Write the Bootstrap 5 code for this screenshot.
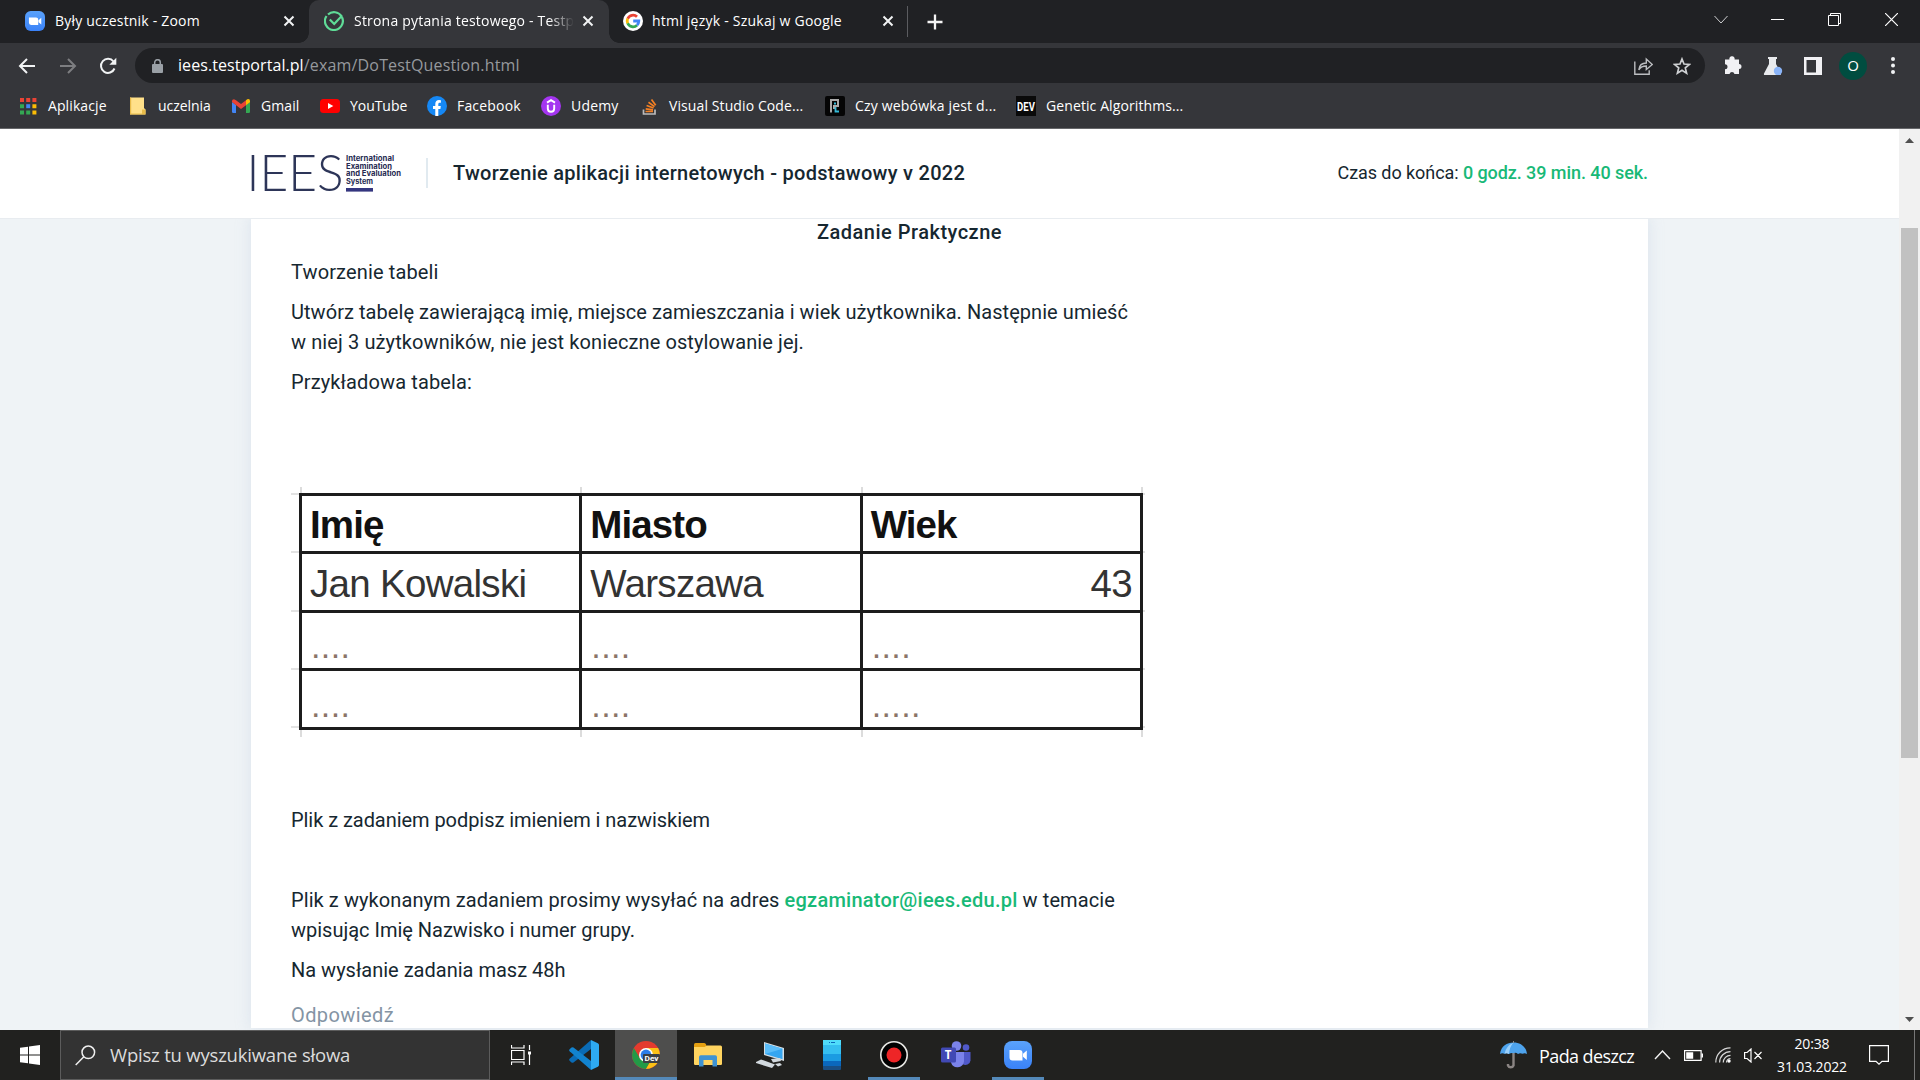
<!DOCTYPE html>
<html lang="pl">
<head>
<meta charset="utf-8">
<title>Strona pytania testowego - Testportal</title>
<link href="https://cdn.jsdelivr.net/npm/bootstrap@5.3.0/dist/css/bootstrap.min.css" rel="stylesheet">
<style>
html,body{height:100%;overflow:hidden}
body{font-family:"Open Sans","Noto Sans",sans-serif;background:#fff;color:#fff}
svg{display:block;flex:none}
.screen{width:1920px;height:1080px;overflow:hidden}
/* browser frame */
.tabstrip{height:43px;background:#202124}
.tab-item{height:43px;font-size:14px;line-height:40px;white-space:nowrap;letter-spacing:.2px;padding-bottom:2px}
.tab-one{width:309px;padding-left:25px}
.tab-two{width:300px;padding-left:15px;background:#35363a;border-radius:10px 10px 0 0;position:relative}
.tab-two::before,.tab-two::after{content:"";position:absolute;bottom:0;width:10px;height:10px}
.tab-two::before{left:-10px;background:radial-gradient(circle at 0 0,#202124 9.5px,#35363a 10px)}
.tab-two::after{right:-10px;background:radial-gradient(circle at 100% 0,#202124 9.5px,#35363a 10px)}
.tab-three{width:298px;padding-left:14px}
.tab-label{width:230px;padding-left:10px;overflow:hidden}
.tab-fade{width:230px;-webkit-mask-image:linear-gradient(90deg,#000 205px,transparent 230px);mask-image:linear-gradient(90deg,#000 205px,transparent 230px)}
.tab-three .tab-label{width:235px;padding-left:9px;letter-spacing:.23px}
.tab-sep{width:1px;height:31px;background:#5b5c60}
.win-btn{width:57px}
.toolbar{height:47px;background:#35363a;padding-left:7px;padding-top:5px}
.nav-cell{width:40.5px;height:35px}
.omnibox{height:35px;width:1570px;border-radius:18px;background:#202124;font-size:16px;white-space:nowrap;margin-left:6.5px;padding-left:17px;padding-right:14px}
.url-dim,.url-host{margin-bottom:2px}
.url-dim{color:#96999d;letter-spacing:.17px}
.url-host{letter-spacing:.07px;margin-left:15px}
.star{margin-left:20px}
.ext-cell{width:40px;height:35px}
.avatar{width:28px;height:28px;background:#004d40;font-size:15px;line-height:1;padding-bottom:1px}
.bookmarks{height:38px;background:#35363a;font-size:14px;white-space:nowrap;line-height:32px;padding-left:18px;letter-spacing:.1px}
.bm{height:32px;gap:10px}
.bm-110{width:110px}.bm-103{width:103px}.bm-89{width:89px}.bm-107{width:107px}.bm-114{width:114px}.bm-98{width:98px}.bm-186{width:186px}.bm-191{width:191px}
.bm-tight{letter-spacing:-.05px}
.bm-wide{letter-spacing:.18px}
.chrome-line{height:1px;background:#66676a}
/* exam page */
.viewport{height:901px;background:#eff3f6;font-family:Roboto,"Liberation Sans",sans-serif;color:#162730}
.page{width:1899px}
.page-head{height:90px;background:#fff;border-bottom:1px solid #e8ecf0;white-space:nowrap;padding:0 251px 1px;position:relative;z-index:1}
.head-logo{overflow:visible}
.head-sep{width:2px;height:30px;background:#e1eaf0;margin:0 25px 0 24px}
.head-title{font-size:20px;font-weight:500;letter-spacing:.28px}
.head-time{font-size:18px;letter-spacing:-.07px;padding-bottom:2px}
.sheet{width:1397px;height:811px;margin-left:251px;background:#fff;box-shadow:0 0 14px rgba(180,198,220,.35);font-size:20px;line-height:30px;padding:0 41px 0 40px}
.sheet p{margin:0 0 10px;white-space:nowrap}
.sheet .sheet-title{margin-top:-2px;font-weight:500;letter-spacing:.49px;text-align:center;width:1237px}
.ls-a{letter-spacing:.13px}.ls-b{letter-spacing:.056px}.ls-c{letter-spacing:.108px}.ls-d{letter-spacing:-.054px}.ls-e{letter-spacing:.086px}.ls-f{letter-spacing:.24px}
.ls-g{letter-spacing:-.01px}
.sheet .mail-note{padding-top:40px}
.green{color:#18b977;font-weight:500}
.sheet .answer-label{color:#8494a4;letter-spacing:.4px;margin-top:15px}
.sample{width:854px;height:250px;margin:90px 0 68px;padding:6px 0 0 8px;
 background:
 linear-gradient(#dcdcdc,#dcdcdc) 9px 0/2px 100% no-repeat,
 linear-gradient(#dcdcdc,#dcdcdc) 289px 0/2px 100% no-repeat,
 linear-gradient(#dcdcdc,#dcdcdc) 570px 0/2px 100% no-repeat,
 linear-gradient(#dcdcdc,#dcdcdc) 850px 0/2px 100% no-repeat,
 repeating-linear-gradient(#fff 0 6px,#e2e2e2 6px 8px,#fff 8px 58.3px)}
.sample table{width:844px;height:236px;border-collapse:collapse;table-layout:fixed;background:#fff;font-family:"Liberation Sans",Arial,sans-serif;font-size:38.5px;line-height:38px}
.sample tr{height:58.4px}
.sample td,.sample th{border:3px solid #1c1c1c;padding:3px 8px 0;white-space:nowrap;color:#333;letter-spacing:-.7px;vertical-align:middle}
.sample th{color:#111;letter-spacing:-.9px}
.sample .dots{color:#8a7468;font-size:34px;letter-spacing:.4px;padding:0 0 3px 9px;vertical-align:bottom}
.scrollbar{width:21px;height:901px;background:#f1f1f1;padding:9px 0 8px}
.thumb{width:17px;height:530px;background:#c1c1c1;margin-top:85px}
/* taskbar */
.taskbar{height:50px;background:#21211f;white-space:nowrap}
.start-cell{width:60px}
.search-box{width:430px;height:50px;background:#333;border:1px solid #5c5c5c;font-size:18.5px;color:#dcdcdc;padding-left:14px;letter-spacing:-.2px}
.search-text{margin-left:14px}
.task-cell{width:62px;height:50px;position:relative}
.task-first{margin-right:1px}
.task-active{background:#4e4e4d}
.task-open::after{content:"";position:absolute;bottom:0;height:3px;left:5px;right:5px;background:#5489b9}
.task-active::after{left:0;right:0}
.weather{font-size:18px;letter-spacing:-.6px;margin-left:12px;padding-top:3px;width:111px}
.clock{font-size:14px;line-height:23px;width:90px;letter-spacing:-.15px}
.desk-edge{width:1px;height:50px;background:#777;margin:0 5px 0 25px}
</style>
<script src="https://cdn.jsdelivr.net/npm/bootstrap@5.3.0/dist/js/bootstrap.bundle.min.js"></script>
</head>
<body>
<svg width="0" height="0" class="position-absolute"><defs>
<symbol id="closex" viewBox="0 0 12 12"><path d="M1.500 1.500l9 9M10.500 1.500l-9 9" stroke="#f1f3f4" stroke-width="2"/></symbol>
<linearGradient id="zg" x1="0" y1="0" x2="0" y2="1"><stop offset="0" stop-color="#5aa2fb"/><stop offset="1" stop-color="#3a82f8"/></linearGradient>
<symbol id="zoomcam" viewBox="0 0 28 28"><rect width="28" height="28" rx="8" fill="url(#zg)"/><path d="M5.500 9h10a3 3 0 0 1 3 3v7.500h-10a3 3 0 0 1-3-3zM19 12.800l3.800-3.300v9.500l-3.800-3.300z" fill="#fff"/></symbol>
</defs></svg>
<div class="screen d-flex flex-column">

 <div class="tabstrip d-flex">
  <div class="tab-item tab-one d-flex align-items-center"><svg width="20" height="20"><use href="#zoomcam"/></svg><span class="tab-label me-1">Były uczestnik - Zoom</span><svg class="ms-1" width="12" height="12"><use href="#closex"/></svg></div>
  <div class="tab-item tab-two d-flex align-items-center"><svg width="20" height="20" viewBox="0 0 20 20" fill="none" stroke="#5fdc97" stroke-width="2.200"><path d="M18 6.200A9 9 0 0 1 10 19 9 9 0 0 1 2.500 5M4 3.500A9 9 0 0 1 17.500 5.200L10.200 13 5.800 8.500"/></svg><span class="tab-label tab-fade">Strona pytania testowego - Testportal</span><svg class="ms-2" width="12" height="12"><use href="#closex"/></svg></div>
  <div class="tab-item tab-three d-flex align-items-center"><svg width="20" height="20" viewBox="0 0 20 20"><circle cx="10" cy="10" r="10" fill="#fff"/><g fill="none" stroke-width="2.800"><path d="M4.700 7.700A5.800 5.800 0 0 1 14 5.800" stroke="#ea4335"/><path d="M4.700 12.400a5.800 5.800 0 0 1 0-4.800" stroke="#fbbc05"/><path d="M4.700 12.300a5.800 5.800 0 0 0 9.300 1.900" stroke="#34a853"/><path d="M10.200 10h5.600a5.800 5.800 0 0 1-1.800 4.200" stroke="#4285f4"/></g></svg><span class="tab-label flex-shrink-0">html język - Szukaj w Google</span><svg class="ms-1" width="12" height="12"><use href="#closex"/></svg></div>
  <div class="d-flex align-items-center"><div class="tab-sep"></div><svg class="ms-3" width="22" height="16" viewBox="-3 0 22 16"><path d="M8 .5v15M.5 8h15" stroke="#f4f4f4" stroke-width="2.300"/></svg></div>
  <div class="d-flex align-items-center ms-auto pb-1">
   <div class="win-btn d-flex justify-content-center"><svg width="14" height="9" viewBox="0 0 14 9" fill="none" stroke="#cfd0d2"><path d="M.5 1l6.500 7 6.500-7"/></svg></div>
   <div class="win-btn d-flex justify-content-center"><svg width="13" height="13" viewBox="0 0 13 13"><path d="M0 6.500h13" stroke="#fff"/></svg></div>
   <div class="win-btn d-flex justify-content-center"><svg width="13" height="13" viewBox="0 0 13 13" fill="none" stroke="#fff"><path d="M.5 2.500h10v10h-10zM2.500 2.500v-2h10v10h-2"/></svg></div>
   <div class="win-btn d-flex justify-content-center"><svg width="13" height="13" viewBox="0 0 13 13"><path d="M0 0l13 13M13 0L0 13" stroke="#fff" stroke-width="1.200"/></svg></div>
  </div>
 </div>

 <div class="toolbar d-flex">
  <div class="nav-cell d-flex align-items-center justify-content-center"><svg width="18" height="16" viewBox="0 0 18 16" fill="none" stroke="#f1f3f4" stroke-width="2"><path d="M17 8H2M9 1L2 8l7 7"/></svg></div>
  <div class="nav-cell d-flex align-items-center justify-content-center"><svg width="18" height="16" viewBox="0 0 18 16" fill="none" stroke="#7d7e81" stroke-width="2"><path d="M1 8h15M9 1l7 7-7 7"/></svg></div>
  <div class="nav-cell d-flex align-items-center justify-content-center"><svg width="18" height="18" viewBox="0 0 18 18"><path d="M15.500 11.500A7 7 0 1 1 14.500 4.500" fill="none" stroke="#f1f3f4" stroke-width="2"/><path d="M17.300.8v7h-7z" fill="#f1f3f4"/></svg></div>
  <div class="omnibox d-flex align-items-center">
   <svg width="11" height="14" viewBox="0 0 11 14"><rect y="5" width="11" height="9" rx="1" fill="#9aa0a6"/><path d="M2.700 6V3.500a2.800 2.800 0 0 1 5.600 0V6" fill="none" stroke="#9aa0a6" stroke-width="1.500"/></svg>
   <span class="url-host">iees.testportal.pl</span><span class="url-dim">/exam/DoTestQuestion.html</span>
   <svg class="ms-auto" width="19" height="18" viewBox="0 0 19 18" fill="none" stroke="#bcbec1" stroke-width="1.400"><path d="M.8 4.500v12.700h14.400v-4M4.800 12.800c.5-4.500 3.500-6.800 7.500-6.800V2l6 5.500-6 5V9c-3.500 0-5.800 1-7.500 3.800z"/></svg>
   <svg class="star" width="18" height="18" viewBox="0 0 18 18" fill="none" stroke="#cfd1d3" stroke-width="1.700"><path d="M9 2l2 5 5.400.4-4.100 3.500 1.300 5.300L9 13.300l-4.600 2.900 1.300-5.300L1.600 7.400 7 7z"/></svg>
  </div>
  <div class="d-flex ms-1 ps-1">
   <div class="ext-cell d-flex align-items-center justify-content-center"><svg width="19" height="19" viewBox="0 0 19 19"><path d="M1 3.500h4.500A2.400 2.400 0 0 1 8 .3a2.400 2.400 0 0 1 2.500 3.200H15V8a2.400 2.400 0 1 1 0 5v5h-4.500a2.600 2.600 0 0 0-5 0H1v-4.800a2.500 2.500 0 0 0 0-5z" fill="#f1f1f4"/></svg></div>
   <div class="ext-cell d-flex align-items-center justify-content-center"><svg width="20" height="18" viewBox="0 0 20 18"><path d="M5 0h9v2h-1v5l5 9.500q.3 1.500-1.500 1.500H2Q.5 18 1 16.500L6 7V2H5z" fill="#e8eaed"/><circle cx="15" cy="14" r="4.200" fill="#8ab4f8"/></svg></div>
   <div class="ext-cell d-flex align-items-center justify-content-center"><svg width="18" height="18" viewBox="0 0 18 18"><path fill-rule="evenodd" fill="#f1f1f4" d="M0 0h18v18H0zM2.500 3v12.500H12V3z"/></svg></div>
   <div class="ext-cell d-flex align-items-center justify-content-center"><div class="avatar rounded-circle d-flex align-items-center justify-content-center">O</div></div>
   <div class="ext-cell d-flex align-items-center justify-content-center"><svg width="4" height="17" viewBox="0 0 4 17" fill="#f1f3f4"><circle cx="2" cy="2" r="2"/><circle cx="2" cy="8.500" r="2"/><circle cx="2" cy="15" r="2"/></svg></div>
  </div>
 </div>

 <div class="bookmarks d-flex">
  <div class="bm bm-110 d-flex align-items-center"><svg width="20" height="20" viewBox="0 0 20 20"><g fill="#ea4335"><path d="M2 2h4v4H2zM8.200 2h4v4h-4zM14.400 2h4v4h-4z"/></g><g fill="#34a853"><path d="M2 8.200h4v4H2zM2 14.400h4v4H2zM8.200 14.400h4v4h-4z"/></g><path fill="#4285f4" d="M8.200 8.200h4v4h-4z"/><path fill="#fbbc05" d="M14.400 8.200h4v4h-4zM14.400 14.400h4v4h-4z"/></svg><span>Aplikacje</span></div>
  <div class="bm bm-103 d-flex align-items-center bm-tight"><svg width="20" height="20" viewBox="0 0 20 20"><path d="M2 1.500h14V12l1.500 1.500v5H2z" fill="#ffe08a"/><path d="M2 1.500h1.200v17H2zM3 17.500h11v1H3zM14 13.500h3.500v5H14z" fill="#e8bb49"/></svg><span>uczelnia</span></div>
  <div class="bm bm-89 d-flex align-items-center"><svg width="20" height="20" viewBox="0 0 20 20"><path fill="#4285f4" d="M1 6l4 3v8H2.200Q1 17 1 15.800z"/><path fill="#34a853" d="M15 9l4-3v9.800q0 1.200-1.200 1.200H15z"/><path fill="#ea4335" d="M1 6V5q0-1.800 2-1.800l2 1 5 3.800 5-3.800v5L10 13 1 6z"/><path fill="#fbbc04" d="M15 4.200l1.200-.9Q19 2.500 19 5v1.200l-4 3z"/></svg><span>Gmail</span></div>
  <div class="bm bm-107 d-flex align-items-center bm-tight"><svg width="20" height="20" viewBox="0 0 20 20"><rect y="3" width="20" height="14" rx="3.500" fill="#f00"/><path d="M8 7v6l5.300-3z" fill="#fff"/></svg><span>YouTube</span></div>
  <div class="bm bm-114 d-flex align-items-center bm-wide"><svg width="20" height="20" viewBox="0 0 20 20"><circle cx="10" cy="10" r="10" fill="#1588f5"/><path d="M8.300 20v-7H6v-3h2.300V8c0-2.700 1.500-4 3.700-4l1.900.2v2.500h-1.200c-1.100 0-1.400.7-1.400 1.400V10h2.500l-.4 3h-2.100v7z" fill="#fff"/></svg><span>Facebook</span></div>
  <div class="bm bm-98 d-flex align-items-center bm-wide"><svg width="20" height="20" viewBox="0 0 20 20" fill="none" stroke="#fff" stroke-width="1.900"><circle cx="10" cy="10" r="10" fill="#a435f0" stroke="none"/><path d="M6 6.600L10 4.200l4 2.400M6.800 8.800v3.700c0 4.300 6.400 4.300 6.400 0V8.800"/></svg><span>Udemy</span></div>
  <div class="bm bm-186 d-flex align-items-center"><svg width="20" height="20" viewBox="0 0 20 20" fill="none"><path d="M4.500 13.500V18H16v-4.500" stroke="#bcbbbb" stroke-width="1.700"/><path d="M6.500 15.500H14M6.700 12.800l7.300 1M7.600 9.500l7 2.500M9.500 6.300l6 4.300M12.500 3.500l4.200 5.800" stroke="#f48024" stroke-width="1.700"/></svg><span>Visual Studio Code...</span></div>
  <div class="bm bm-191 d-flex align-items-center bm-wide"><svg width="20" height="20" viewBox="0 0 20 20" fill="none"><rect width="20" height="20" rx="2" fill="#050505"/><path d="M6 16.500V4h7v6H9v3" stroke="#aaa" stroke-width="2"/><path d="M9 7.500h2M10.500 11v4.500H14" stroke="#35b9d6" stroke-width="1.800"/></svg><span>Czy webówka jest d...</span></div>
  <div class="bm d-flex align-items-center"><svg width="20" height="20" viewBox="0 0 20 20"><rect width="20" height="20" fill="#0a0a0a"/><text x="1" y="14.500" font-family="Roboto" font-weight="700" font-size="12.500" textLength="18" lengthAdjust="spacingAndGlyphs" fill="#fff">DEV</text></svg><span>Genetic Algorithms...</span></div>
 </div>
 <div class="chrome-line"></div>

 <div class="viewport d-flex">
  <main class="page">
   <header class="page-head d-flex align-items-center">
    <svg class="head-logo" width="151" height="40" viewBox="0 0 151 40"><text x="-4.500" y="38" font-family="Lato" font-weight="300" font-size="50.500" textLength="97" lengthAdjust="spacingAndGlyphs" fill="#2d3558">IEES</text><g font-family="Inter" font-weight="700" font-size="7.600" fill="#262b52"><text x="95" y="8" textLength="48" lengthAdjust="spacingAndGlyphs">International</text><text x="95" y="15.700" textLength="46" lengthAdjust="spacingAndGlyphs">Examination</text><text x="95" y="23.300" textLength="55" lengthAdjust="spacingAndGlyphs">and Evaluation</text><text x="95" y="31" textLength="27" lengthAdjust="spacingAndGlyphs">System</text></g><rect x="95" y="35" width="27" height="3.600" fill="#34367f"/></svg>
    <div class="head-sep"></div>
    <div class="head-title">Tworzenie aplikacji internetowych - podstawowy v 2022</div>
    <div class="head-time ms-auto">Czas do końca: <span class="green">0 godz. 39 min. 40 sek.</span></div>
   </header>
   <section class="sheet">
    <p class="sheet-title">Zadanie Praktyczne</p>
    <p class="ls-a">Tworzenie tabeli</p>
    <p><span class="ls-b">Utwórz tabelę zawierającą imię, miejsce zamieszczania i wiek użytkownika. Następnie umieść</span><br><span class="ls-c">w niej 3 użytkowników, nie jest konieczne ostylowanie jej.</span></p>
    <p class="ls-a mb-0">Przykładowa tabela:</p>
    <div class="sample">
     <table>
      <tr><th>Imię</th><th>Miasto</th><th>Wiek</th></tr>
      <tr><td>Jan Kowalski</td><td>Warszawa</td><td class="text-end">43</td></tr>
      <tr><td class="dots">....</td><td class="dots">....</td><td class="dots">....</td></tr>
      <tr><td class="dots">....</td><td class="dots">....</td><td class="dots">.....</td></tr>
     </table>
    </div>
    <p class="ls-d">Plik z zadaniem podpisz imieniem i nazwiskiem</p>
    <p class="mail-note ls-e">Plik z wykonanym zadaniem prosimy wysyłać na adres <span class="green ls-f">egzaminator@iees.edu.pl</span> w temacie<br><span class="ls-g">wpisując Imię Nazwisko i numer grupy.</span></p>
    <p>Na wysłanie zadania masz 48h</p>
    <p class="answer-label">Odpowiedź</p>
   </section>
  </main>
  <div class="scrollbar d-flex flex-column align-items-center">
   <svg width="9" height="5" viewBox="0 0 9 5"><path d="M4.500 0L9 5H0z" fill="#505050"/></svg>
   <div class="thumb"></div>
   <svg class="mt-auto" width="9" height="5" viewBox="0 0 9 5"><path d="M0 0h9L4.500 5z" fill="#505050"/></svg>
  </div>
 </div>

 <div class="taskbar d-flex align-items-center">
  <div class="start-cell d-flex justify-content-center"><svg width="20" height="20" viewBox="0 0 20 20" fill="#fff"><path d="M0 2.800l8-1.100v7.800H0zM9 1.500L20 0v9.500H9zM0 10.500h8v7.800l-8-1.100zM9 10.500h11V20L9 18.500z"/></svg></div>
  <div class="search-box d-flex align-items-center"><svg width="21" height="21" viewBox="0 0 21 21" fill="none" stroke="#f0f0f0" stroke-width="1.500"><circle cx="13.300" cy="7.300" r="6.300"/><path d="M8.800 11.800L.7 20"/></svg><span class="search-text">Wpisz tu wyszukiwane słowa</span></div>
  <div class="task-cell task-first d-flex align-items-center justify-content-center"><svg width="21" height="20" viewBox="0 0 21 20" fill="none" stroke="#fff"><path d="M.5 5.500h12.500v9H.5zM.5 0v3h12.500V0M.5 20v-3h12.500v3M18.500 0v5M18.500 9v11" stroke-width="1.200"/><path d="M17 6.500h3v3h-3z" fill="#fff" stroke="none"/></svg></div>
  <div class="task-cell d-flex align-items-center justify-content-center"><svg width="30" height="30" viewBox="0 0 30 30"><path d="M22 0v9L4.500 22.500q-1 .7-2 0L.6 20.800q-1-1 0-2z" fill="#0a6bb5"/><path d="M22 30v-9L4.500 7.500q-1-.7-2 0L.6 9.200q-1 1 0 2z" fill="#1283cf"/><path d="M22 0l6.800 3.200Q30 4 30 5v20q0 1.200-1.200 1.800L22 30z" fill="#2eaaf2"/></svg></div>
  <div class="task-cell task-active task-open d-flex align-items-center justify-content-center"><svg width="28" height="28" viewBox="0 0 28 28"><circle cx="14" cy="14" r="14" fill="#e33b2e"/><path d="M1.900 7A14 14 0 0 0 14 28l6-10.500H8z" fill="#229a47"/><path d="M14 28A14 14 0 0 0 26.100 7H14l6 10.500z" fill="#fbc116"/><circle cx="14" cy="14" r="7" fill="#fff"/><circle cx="14" cy="14" r="5.400" fill="#2d7de9"/><rect x="11" y="13" width="17" height="9" rx="1" fill="#3c4043"/><text x="12.500" y="20.300" font-family="Roboto" font-weight="700" font-size="7.500" textLength="14" lengthAdjust="spacingAndGlyphs" fill="#fff">Dev</text></svg></div>
  <div class="task-cell d-flex align-items-center justify-content-center"><svg width="28" height="24" viewBox="0 0 28 24"><path d="M0 1.500Q0 0 1.500 0H10q1 0 1.800 1L13 3.500v4H0z" fill="#e5a011"/><path d="M0 4h10.500L13 2.500h13.500Q28 2.500 28 4v17q0 1-1.200 1H1.200Q0 22 0 21z" fill="#ffd460"/><path d="M5 23.500V14q0-1.800 1.800-1.800h14.400Q23 12.200 23 14v9.500h-4.500V17h-9v6.500z" fill="#3f93d3"/></svg></div>
  <div class="task-cell d-flex align-items-center justify-content-center"><svg width="28" height="26" viewBox="0 0 28 26"><path d="M8 0l20 6v13L8 13z" fill="#d5dde2"/><path d="M9 1.500l17.500 5.300v10.500L9 12z" fill="#36a6f1"/><path d="M9 1.500l17.500 5.300L9 12z" fill="#5cbef9"/><path d="M15 17l9-1 1 3-8 1.500zM0 20l5-2.500 14 5-3 3.500L0 21zM19 22l5-1 2 2-4 1.500z" fill="#d2d9de"/></svg></div>
  <div class="task-cell d-flex align-items-center justify-content-center"><svg width="18" height="30" viewBox="0 0 18 30"><rect width="18" height="30" rx="1" fill="#194f85"/><path d="M0 0h18v26H0z" fill="#0b68bd"/><path d="M0 0h18v21H0z" fill="#1b9be2"/><path d="M0 0h18v14H0z" fill="#35bff1"/><path d="M0 0h18v5H0z" fill="#4fdcfb"/><path d="M6 2.500h1M8 2.500h4" stroke="#0b68bd"/></svg></div>
  <div class="task-cell task-open d-flex align-items-center justify-content-center"><svg width="28" height="28" viewBox="0 0 28 28"><circle cx="14" cy="14" r="13.200" fill="#000" stroke="#e8e8e4" stroke-width="1.600"/><circle cx="14" cy="14" r="7.500" fill="#ee2527"/></svg></div>
  <div class="task-cell d-flex align-items-center justify-content-center"><svg width="30" height="28" viewBox="0 0 30 28"><circle cx="25" cy="6.500" r="3.300" fill="#5059c9"/><path d="M20 11h9.500v8.500a5 5 0 0 1-8 3.500z" fill="#5059c9"/><circle cx="15.500" cy="5" r="4.800" fill="#7b83eb"/><path d="M10 11h13v9.500a6.700 6.700 0 0 1-13 1z" fill="#7b83eb"/><rect y="6.500" width="15" height="15" rx="1.500" fill="#4149b4"/><text x="3.800" y="18" font-family="Open Sans" font-weight="700" font-size="11.500" fill="#fff">T</text></svg></div>
  <div class="task-cell task-open d-flex align-items-center justify-content-center"><svg width="28" height="28"><use href="#zoomcam"/></svg></div>

  <div class="d-flex align-items-center ms-auto">
   <svg width="27" height="29" viewBox="0 0 27 29"><path d="M13.500 12v12.500a3 3 0 0 1-5.500 0v-1.500" fill="none" stroke="#8b8583" stroke-width="2.400"/><path d="M0 13C1 5 7 1.500 13.500 1.500S26 5 27 13q-2-1.500-4.500-.3Q20 11.500 18 13q-2-1.800-4.500-.8Q11 11.500 9 13q-2.500-1.500-4.500-.3Q2 11.500 0 13z" fill="#4ea3ec"/><path d="M4.500 12.700Q6 5 13.500 1.500 9.500 6 9 13q-2.500-1.500-4.500-.3z" fill="#9ad0fb"/><path d="M13.500 0v2" stroke="#888"/></svg>
   <span class="weather">Pada deszcz</span>
   <svg class="ms-1 me-1" width="17" height="10" viewBox="0 0 17 10" fill="none" stroke="#f3f3f3" stroke-width="1.400"><path d="M1 9l7.500-8L16 9"/></svg>
   <svg class="ms-1 ps-1" width="24" height="13" viewBox="-1 0 20 11"><path d="M.6.600h16.500v9.800H.6z" fill="none" stroke="#fff" stroke-width="1.200"/><path d="M2.200 2.200h7v6.600h-7zM17.500 3.500h1.500v4h-1.500z" fill="#fff"/></svg>
   <svg class="ms-2 ps-1" width="20" height="16" viewBox="0 0 16 16" fill="none" stroke="#d8d8d8" stroke-width="1.200"><path d="M.8 15.500A14.500 14.500 0 0 1 15.500.8M4.600 15.500A10.800 10.800 0 0 1 15.500 4.600M8.300 15.500a7.200 7.200 0 0 1 7.200-7.200M11.500 15.500a4 4 0 0 1 4-4"/><circle cx="14" cy="14" r="1.700" fill="#fff" stroke="none"/></svg>
   <svg class="ms-2 ps-1" width="24" height="15" viewBox="-1 0 20 15" fill="none" stroke="#fff" stroke-width="1.200"><path d="M.6 4.500h2.500L7 1v13l-3.900-3.500H.6zM10.500 4l7 7M17.500 4l-7 7"/></svg>
   <div class="clock text-center d-flex flex-column ms-1"><span>20:38</span><span>31.03.2022</span></div>
   <svg class="ms-2 ps-1" width="24" height="20" viewBox="0 0 20 20" fill="none" stroke="#fff" stroke-width="1.200"><path d="M.6.600h18.800v15.800h-6.400L10 19.200 7 16.400H.6z"/></svg>
   <div class="desk-edge"></div>
  </div>
 </div>
</div>
</body>
</html>
